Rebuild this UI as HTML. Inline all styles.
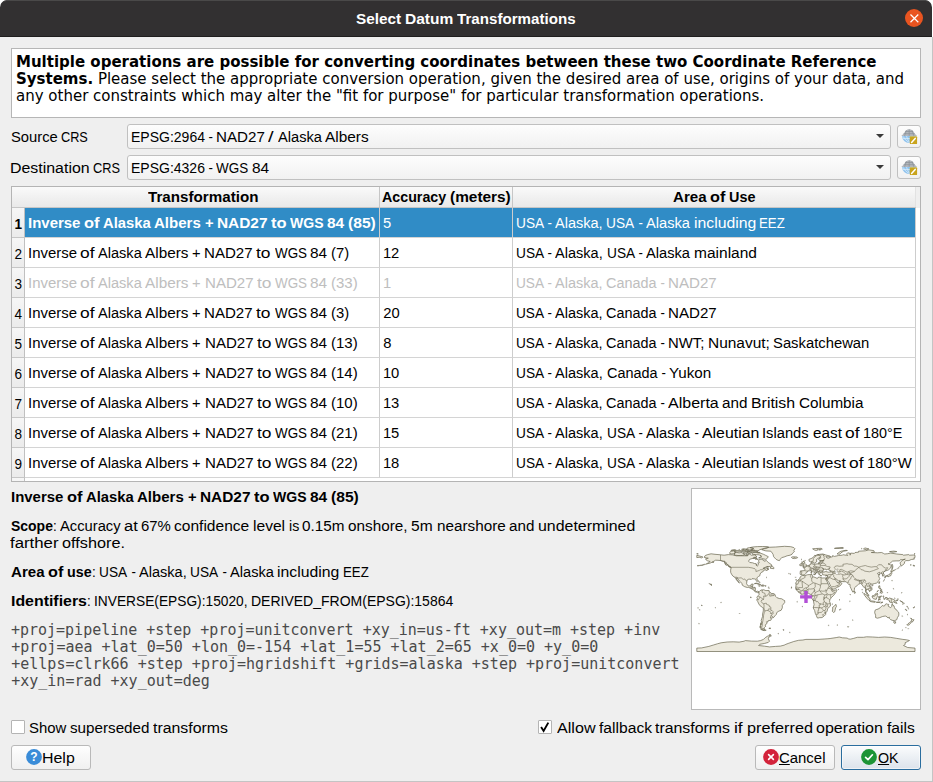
<!DOCTYPE html>
<html lang="en">
<head>
<meta charset="utf-8">
<title>Select Datum Transformations</title>
<style>
*{box-sizing:border-box;margin:0;padding:0}
html,body{width:933px;height:782px;overflow:hidden;background:#fff}
body{position:relative;font-family:"Liberation Sans",sans-serif;font-size:14.75px;color:#000}
#win{position:absolute;left:0;top:0;width:932px;height:782px;background:#efefef;border-radius:7px 7px 0 0;overflow:hidden}
#edgeR{position:absolute;left:932px;top:37px;width:1px;height:745px;background:#c4c4c4}
#edgeB{position:absolute;left:0;top:781px;width:933px;height:1px;background:#c4c4c4}
#titlebar{position:absolute;left:0;top:0;width:932px;height:37px;background:#323031;border-bottom:1px solid #1f1e1e;border-radius:7px 7px 0 0;box-shadow:inset 0 1px 0 #4a4949}
#close{position:absolute;left:904.6px;top:8.7px;width:18.8px;height:18.8px;border-radius:50%;background:#e95420}
.x{position:absolute;white-space:pre;line-height:20px;height:20px;transform-origin:0 0}
.s{display:inline-block;white-space:pre;transform-origin:0 0}
.bd{font-weight:bold}
.ti{font-size:15px;color:#fff}
.mono{font-family:"DejaVu Sans Mono","Liberation Mono",monospace;font-size:15px;color:#4a4a4a}
.w{color:#fff}.g{color:#bebebe}
#intro{position:absolute;left:11px;top:48px;width:910px;height:70px;background:#fff;border:1px solid #b6b6b6;font-family:"DejaVu Sans","Liberation Sans",sans-serif;font-size:15px;line-height:17px;padding:5px 0 0 4px;white-space:pre}
.combo{position:absolute;left:127px;width:764px;height:25px;border:1px solid #c0c0c0;border-radius:3px;background:linear-gradient(#fdfdfd,#f1f1f1)}
.combo i{position:absolute;left:747.5px;top:9.3px;width:0;height:0;border-left:4px solid transparent;border-right:4px solid transparent;border-top:4.8px solid #3a3a3a}
.ibtn{position:absolute;left:897px;width:24px;height:23px;border:1px solid #c0c0c0;border-radius:3px;background:linear-gradient(#fdfdfd,#f1f1f1)}
#table{position:absolute;left:11px;top:186px;width:910px;height:296px;border:1px solid #b4b4b4;background:#fff;overflow:hidden}
.hdr{position:absolute;left:0;top:0;width:904px;height:21px;background:linear-gradient(#fafafa,#f1f1f1 50%,#e9e9e9);border-bottom:1px solid #c6c6c6}
.hfill{position:absolute;left:904px;top:0;width:4px;height:21px;background:#efefef}
.hdr i{position:absolute;top:0;width:1px;height:20px;background:#c6c6c6}
.row{position:absolute;left:0;width:904px;height:30px}
.row .rh{position:absolute;left:0;top:0;width:13px;height:30px;border-right:1px solid #c0c0c0;border-bottom:1px solid #c6c6c6;background:linear-gradient(#f6f6f6,#ebebeb)}
.row .c{position:absolute;top:0;height:30px;border-right:1px solid #cdcdcd;border-bottom:1px solid #d4d4d4}
.c1{left:13px;width:355px}.c2{left:368px;width:133px}.c3{left:501px;width:403px}
.row.sel .c{background:#308cc6}
#map{position:absolute;left:691px;top:488px;width:230px;height:222px;background:#fff;border:1px solid #b9b9b9}
.cb{position:absolute;width:14px;height:14px;background:#fff;border:1px solid #b4b4b4;border-radius:1px}
.cb svg{position:absolute;left:0;top:0}
.btn{position:absolute;top:745px;width:80px;height:25px;border:1px solid #b9b9b9;border-radius:3px;background:linear-gradient(#fefefe,#f0f0f0)}
.btn.ok{border:1px solid #2a6d9e;background:linear-gradient(#fbfcfd,#dce3eb);box-shadow:inset 0 0 0 1px rgba(255,255,255,.55)}
.ic{position:absolute;top:749px;width:16px;height:16px}
</style>
</head>
<body>
<div id="win">
<div id="titlebar"></div>
<div class="x bd ti" id="title" style="top:9px;left:356.28px"><span class="s" style="width:48.79px;transform:scaleX(1.0217)">Select </span><span class="s" style="width:51.95px;transform:scaleX(1.0347)">Datum </span><span class="s" style="width:118.59px;transform:scaleX(1.0089)">Transformations</span></div>
<div id="close"><svg style="position:absolute;left:0;top:0" width="18.8" height="18.8" viewBox="0 0 18.8 18.8"><path d="M5.5 5.5 L13.3 13.3 M13.3 5.5 L5.5 13.3" stroke="#fff" stroke-width="1.2" fill="none"/></svg></div>
<div id="intro"><b>Multiple operations are possible for converting coordinates between these two Coordinate Reference
Systems.</b> Please select the appropriate conversion operation, given the desired area of use, origins of your data, and
any other constraints which may alter the "fit for purpose" for particular transformation operations.</div>
<div class="x" id="lsrc" style="top:127px;left:10.58px"><span class="s" style="width:50.32px;transform:scaleX(1.0020)">Source </span><span class="s" style="width:26.87px;transform:scaleX(0.8623)">CRS</span></div>
<div class="x" id="ldst" style="top:158px;left:10.35px"><span class="s" style="width:83.15px;transform:scaleX(1.0793)">Destination </span><span class="s" style="width:26.97px;transform:scaleX(0.8656)">CRS</span></div>
<div class="combo" style="top:124px"><i></i></div>
<div class="combo" style="top:155px"><i></i></div>
<div class="x" id="csrc" style="top:127px;left:130.76px"><span class="s" style="width:77.49px;transform:scaleX(0.9500)">EPSG:2964 </span><span class="s" style="width:7.93px;text-indent:0.7px;transform:scaleX(0.8982)">- </span><span class="s" style="width:52.31px;transform:scaleX(1.0263)">NAD27 </span><span class="s" style="width:9.12px;transform:scaleX(1.3641)">/ </span><span class="s" style="width:47.45px;transform:scaleX(0.9929)">Alaska </span><span class="s" style="width:43.70px;transform:scaleX(1.0447)">Albers</span></div>
<div class="x" id="cdst" style="top:158px;left:130.77px"><span class="s" style="width:77.39px;transform:scaleX(0.9488)">EPSG:4326 </span><span class="s" style="width:7.92px;text-indent:0.7px;transform:scaleX(0.8971)">- </span><span class="s" style="width:35.66px;transform:scaleX(0.9125)">WGS </span><span class="s" style="width:17.21px;transform:scaleX(1.0480)">84</span></div>
<div class="ibtn" style="top:125px"><svg style="position:absolute;left:-1px;top:-1px" width="24" height="23" viewBox="0 0 24 23"><path d="M4.2 10.9 Q5.2 9.9 6.6 8.7 Q8.3 5.6 10.4 4.6 Q12.2 4 14 4.6 Q16.1 5.6 17.8 8.7 Q19.2 9.9 20.2 10.9 Z" fill="#b3b7bc"/><path d="M6.6 8.7 H17.8 M8.2 6.5 H16.2 M12.2 4.3 V10.8 M9.4 5.2 L7.6 10.8 M15 5.2 L16.8 10.8" stroke="#8b9096" stroke-width="0.7" fill="none"/><path d="M5.1 10.9 A7.1 7.1 0 0 0 19.3 10.9 Z" fill="#8fc3ee"/><path d="M6.2 11.5 Q8 15 11.5 17.2 M9.5 11.2 Q10.5 14.5 12.5 17.5 M5.8 13.6 H13" stroke="#d3e9fa" stroke-width="0.9" fill="none"/><rect x="12.8" y="11.6" width="7.3" height="7.5" rx="0.9" fill="#c9a41c"/><path d="M12.8 12.5 Q12.8 11.6 13.7 11.6 H19.2 Q20.1 11.6 20.1 12.5" fill="none" stroke="#dcc050" stroke-width="0.6"/><path d="M14.6 17.4 L18.2 13.4" stroke="#fff" stroke-width="1.5" stroke-linecap="round"/></svg>
</div>
<div class="ibtn" style="top:156px"><svg style="position:absolute;left:-1px;top:-1px" width="24" height="23" viewBox="0 0 24 23"><path d="M4.2 10.9 Q5.2 9.9 6.6 8.7 Q8.3 5.6 10.4 4.6 Q12.2 4 14 4.6 Q16.1 5.6 17.8 8.7 Q19.2 9.9 20.2 10.9 Z" fill="#b3b7bc"/><path d="M6.6 8.7 H17.8 M8.2 6.5 H16.2 M12.2 4.3 V10.8 M9.4 5.2 L7.6 10.8 M15 5.2 L16.8 10.8" stroke="#8b9096" stroke-width="0.7" fill="none"/><path d="M5.1 10.9 A7.1 7.1 0 0 0 19.3 10.9 Z" fill="#8fc3ee"/><path d="M6.2 11.5 Q8 15 11.5 17.2 M9.5 11.2 Q10.5 14.5 12.5 17.5 M5.8 13.6 H13" stroke="#d3e9fa" stroke-width="0.9" fill="none"/><rect x="12.8" y="11.6" width="7.3" height="7.5" rx="0.9" fill="#c9a41c"/><path d="M12.8 12.5 Q12.8 11.6 13.7 11.6 H19.2 Q20.1 11.6 20.1 12.5" fill="none" stroke="#dcc050" stroke-width="0.6"/><path d="M14.6 17.4 L18.2 13.4" stroke="#fff" stroke-width="1.5" stroke-linecap="round"/></svg>
</div>
<div id="table">
<div class="hdr"><i style="left:367px"></i><i style="left:500px"></i><i style="left:903px;background:#e2e2e2"></i></div><div class="hfill"></div>
<div class="row sel" style="top:21px"><div class="rh"></div><div class="c c1"></div><div class="c c2"></div><div class="c c3"></div></div>
<div class="row" style="top:51px"><div class="rh"></div><div class="c c1"></div><div class="c c2"></div><div class="c c3"></div></div>
<div class="row" style="top:81px"><div class="rh"></div><div class="c c1"></div><div class="c c2"></div><div class="c c3"></div></div>
<div class="row" style="top:111px"><div class="rh"></div><div class="c c1"></div><div class="c c2"></div><div class="c c3"></div></div>
<div class="row" style="top:141px"><div class="rh"></div><div class="c c1"></div><div class="c c2"></div><div class="c c3"></div></div>
<div class="row" style="top:171px"><div class="rh"></div><div class="c c1"></div><div class="c c2"></div><div class="c c3"></div></div>
<div class="row" style="top:201px"><div class="rh"></div><div class="c c1"></div><div class="c c2"></div><div class="c c3"></div></div>
<div class="row" style="top:231px"><div class="rh"></div><div class="c c1"></div><div class="c c2"></div><div class="c c3"></div></div>
<div class="row" style="top:261px"><div class="rh"></div><div class="c c1"></div><div class="c c2"></div><div class="c c3"></div></div>
<div class="row" style="top:291px"><div class="rh"></div></div>
</div>
<div class="x bd" id="h1" style="top:187px;left:147.72px"><span class="s" style="width:110.45px;transform:scaleX(1.0286)">Transformation</span></div>
<div class="x bd" id="h2" style="top:187px;left:382.15px"><span class="s" style="width:67.82px;transform:scaleX(0.9668)">Accuracy </span><span class="s" style="width:60.75px;transform:scaleX(1.0437)">(meters)</span></div>
<div class="x bd" id="h3" style="top:187px;left:673.35px"><span class="s" style="width:37.15px;transform:scaleX(1.0236)">Area </span><span class="s" style="width:18.89px;transform:scaleX(1.0994)">of </span><span class="s" style="width:26.40px;transform:scaleX(0.9751)">Use</span></div>
<div class="x bd" id="rh0" style="top:214px;left:11.6px;width:13.6px;text-align:center;transform:scaleX(0.92);">1</div>
<div class="x bd w" id="r0a" style="top:213px;left:27.67px"><span class="s" style="width:56.07px;transform:scaleX(1.0152)">Inverse </span><span class="s" style="width:19.13px;transform:scaleX(1.1133)">of </span><span class="s" style="width:51.45px;transform:scaleX(1.0052)">Alaska </span><span class="s" style="width:50.45px;transform:scaleX(1.0196)">Albers </span><span class="s" style="width:12.25px;transform:scaleX(1.0001)">+ </span><span class="s" style="width:54.14px;transform:scaleX(1.0439)">NAD27 </span><span class="s" style="width:19.18px;transform:scaleX(1.1168)">to </span><span class="s" style="width:37.16px;transform:scaleX(0.9517)">WGS </span><span class="s" style="width:20.88px;transform:scaleX(1.0505)">84 </span><span class="s" style="width:27.82px;transform:scaleX(1.0604)">(85)</span></div>
<div class="x w" id="r0b" style="top:213px;left:382.90px;">5</div>
<div class="x w" id="r0c" style="top:213px;left:515.61px"><span class="s" style="width:31.81px;transform:scaleX(0.9278)">USA </span><span class="s" style="width:7.91px;text-indent:0.7px;transform:scaleX(0.9004)">- </span><span class="s" style="width:51.18px;transform:scaleX(0.9853)">Alaska, </span><span class="s" style="width:31.83px;transform:scaleX(0.9278)">USA </span><span class="s" style="width:7.91px;text-indent:0.7px;transform:scaleX(0.8943)">- </span><span class="s" style="width:47.43px;transform:scaleX(0.9921)">Alaska </span><span class="s" style="width:65.80px;transform:scaleX(1.0700)">including </span><span class="s" style="width:25.78px;transform:scaleX(0.8981)">EEZ</span></div>
<div class="x" id="rh1" style="top:244px;left:11.6px;width:13.6px;text-align:center;transform:scaleX(0.92);">2</div>
<div class="x" id="r1a" style="top:243px;left:27.56px"><span class="s" style="width:52.50px;transform:scaleX(1.0133)">Inverse </span><span class="s" style="width:18.16px;transform:scaleX(1.1800)">of </span><span class="s" style="width:47.23px;transform:scaleX(0.9880)">Alaska </span><span class="s" style="width:46.95px;transform:scaleX(1.0395)">Albers </span><span class="s" style="width:12.07px;transform:scaleX(0.9940)">+ </span><span class="s" style="width:52.05px;transform:scaleX(1.0213)">NAD27 </span><span class="s" style="width:18.32px;transform:scaleX(1.1800)">to </span><span class="s" style="width:35.53px;transform:scaleX(0.9091)">WGS </span><span class="s" style="width:20.63px;transform:scaleX(1.0441)">84 </span><span class="s" style="width:18.14px;transform:scaleX(1.0053)">(7)</span></div>
<div class="x" id="r1b" style="top:243px;left:382.89px;">12</div>
<div class="x" id="r1c" style="top:243px;left:515.60px"><span class="s" style="width:31.84px;transform:scaleX(0.9286)">USA </span><span class="s" style="width:7.92px;text-indent:0.7px;transform:scaleX(0.9011)">- </span><span class="s" style="width:51.22px;transform:scaleX(0.9862)">Alaska, </span><span class="s" style="width:31.86px;transform:scaleX(0.9287)">USA </span><span class="s" style="width:7.92px;text-indent:0.7px;transform:scaleX(0.8951)">- </span><span class="s" style="width:47.47px;transform:scaleX(0.9930)">Alaska </span><span class="s" style="width:62.97px;transform:scaleX(1.0519)">mainland</span></div>
<div class="x" id="rh2" style="top:274px;left:11.6px;width:13.6px;text-align:center;transform:scaleX(0.92);">3</div>
<div class="x g" id="r2a" style="top:273px;left:27.56px"><span class="s" style="width:52.53px;transform:scaleX(1.0138)">Inverse </span><span class="s" style="width:18.17px;transform:scaleX(1.1800)">of </span><span class="s" style="width:47.26px;transform:scaleX(0.9886)">Alaska </span><span class="s" style="width:46.97px;transform:scaleX(1.0401)">Albers </span><span class="s" style="width:12.08px;transform:scaleX(0.9945)">+ </span><span class="s" style="width:52.08px;transform:scaleX(1.0218)">NAD27 </span><span class="s" style="width:18.33px;transform:scaleX(1.1800)">to </span><span class="s" style="width:35.55px;transform:scaleX(0.9096)">WGS </span><span class="s" style="width:20.64px;transform:scaleX(1.0447)">84 </span><span class="s" style="width:26.71px;transform:scaleX(1.0177)">(33)</span></div>
<div class="x g" id="r2b" style="top:273px;left:382.89px;">1</div>
<div class="x g" id="r2c" style="top:273px;left:515.61px"><span class="s" style="width:31.76px;transform:scaleX(0.9263)">USA </span><span class="s" style="width:7.90px;text-indent:0.7px;transform:scaleX(0.8988)">- </span><span class="s" style="width:51.09px;transform:scaleX(0.9837)">Alaska, </span><span class="s" style="width:53.93px;transform:scaleX(0.9758)">Canada </span><span class="s" style="width:7.90px;text-indent:0.7px;transform:scaleX(0.8928)">- </span><span class="s" style="width:48.69px;transform:scaleX(1.0238)">NAD27</span></div>
<div class="x" id="rh3" style="top:304px;left:11.6px;width:13.6px;text-align:center;transform:scaleX(0.92);">4</div>
<div class="x" id="r3a" style="top:303px;left:27.56px"><span class="s" style="width:52.50px;transform:scaleX(1.0133)">Inverse </span><span class="s" style="width:18.16px;transform:scaleX(1.1800)">of </span><span class="s" style="width:47.23px;transform:scaleX(0.9880)">Alaska </span><span class="s" style="width:46.95px;transform:scaleX(1.0395)">Albers </span><span class="s" style="width:12.07px;transform:scaleX(0.9940)">+ </span><span class="s" style="width:52.05px;transform:scaleX(1.0213)">NAD27 </span><span class="s" style="width:18.32px;transform:scaleX(1.1800)">to </span><span class="s" style="width:35.53px;transform:scaleX(0.9091)">WGS </span><span class="s" style="width:20.63px;transform:scaleX(1.0441)">84 </span><span class="s" style="width:18.14px;transform:scaleX(1.0053)">(3)</span></div>
<div class="x" id="r3b" style="top:303px;left:383.24px;">20</div>
<div class="x" id="r3c" style="top:303px;left:515.61px"><span class="s" style="width:31.76px;transform:scaleX(0.9263)">USA </span><span class="s" style="width:7.90px;text-indent:0.7px;transform:scaleX(0.8988)">- </span><span class="s" style="width:51.09px;transform:scaleX(0.9837)">Alaska, </span><span class="s" style="width:53.93px;transform:scaleX(0.9758)">Canada </span><span class="s" style="width:7.90px;text-indent:0.7px;transform:scaleX(0.8928)">- </span><span class="s" style="width:48.69px;transform:scaleX(1.0238)">NAD27</span></div>
<div class="x" id="rh4" style="top:334px;left:11.6px;width:13.6px;text-align:center;transform:scaleX(0.92);">5</div>
<div class="x" id="r4a" style="top:333px;left:27.56px"><span class="s" style="width:52.53px;transform:scaleX(1.0138)">Inverse </span><span class="s" style="width:18.17px;transform:scaleX(1.1800)">of </span><span class="s" style="width:47.26px;transform:scaleX(0.9886)">Alaska </span><span class="s" style="width:46.97px;transform:scaleX(1.0401)">Albers </span><span class="s" style="width:12.08px;transform:scaleX(0.9945)">+ </span><span class="s" style="width:52.08px;transform:scaleX(1.0218)">NAD27 </span><span class="s" style="width:18.33px;transform:scaleX(1.1800)">to </span><span class="s" style="width:35.55px;transform:scaleX(0.9096)">WGS </span><span class="s" style="width:20.64px;transform:scaleX(1.0447)">84 </span><span class="s" style="width:26.71px;transform:scaleX(1.0177)">(13)</span></div>
<div class="x" id="r4b" style="top:333px;left:383.29px;">8</div>
<div class="x" id="r4c" style="top:333px;left:515.61px"><span class="s" style="width:31.75px;transform:scaleX(0.9258)">USA </span><span class="s" style="width:7.89px;text-indent:0.7px;transform:scaleX(0.8984)">- </span><span class="s" style="width:51.07px;transform:scaleX(0.9832)">Alaska, </span><span class="s" style="width:53.90px;transform:scaleX(0.9754)">Canada </span><span class="s" style="width:7.89px;text-indent:0.7px;transform:scaleX(0.8924)">- </span><span class="s" style="width:39.84px;transform:scaleX(1.0082)">NWT; </span><span class="s" style="width:65.39px;transform:scaleX(1.0484)">Nunavut; </span><span class="s" style="width:96.33px;transform:scaleX(1.0041)">Saskatchewan</span></div>
<div class="x" id="rh5" style="top:364px;left:11.6px;width:13.6px;text-align:center;transform:scaleX(0.92);">6</div>
<div class="x" id="r5a" style="top:363px;left:27.56px"><span class="s" style="width:52.53px;transform:scaleX(1.0138)">Inverse </span><span class="s" style="width:18.17px;transform:scaleX(1.1800)">of </span><span class="s" style="width:47.26px;transform:scaleX(0.9886)">Alaska </span><span class="s" style="width:46.97px;transform:scaleX(1.0401)">Albers </span><span class="s" style="width:12.08px;transform:scaleX(0.9945)">+ </span><span class="s" style="width:52.08px;transform:scaleX(1.0218)">NAD27 </span><span class="s" style="width:18.33px;transform:scaleX(1.1800)">to </span><span class="s" style="width:35.55px;transform:scaleX(0.9096)">WGS </span><span class="s" style="width:20.64px;transform:scaleX(1.0447)">84 </span><span class="s" style="width:26.71px;transform:scaleX(1.0177)">(14)</span></div>
<div class="x" id="r5b" style="top:363px;left:382.89px;">10</div>
<div class="x" id="r5c" style="top:363px;left:515.60px"><span class="s" style="width:31.86px;transform:scaleX(0.9292)">USA </span><span class="s" style="width:7.92px;text-indent:0.7px;transform:scaleX(0.9016)">- </span><span class="s" style="width:51.25px;transform:scaleX(0.9868)">Alaska, </span><span class="s" style="width:54.10px;transform:scaleX(0.9789)">Canada </span><span class="s" style="width:7.92px;text-indent:0.7px;transform:scaleX(0.8956)">- </span><span class="s" style="width:42.26px;transform:scaleX(1.0304)">Yukon</span></div>
<div class="x" id="rh6" style="top:394px;left:11.6px;width:13.6px;text-align:center;transform:scaleX(0.92);">7</div>
<div class="x" id="r6a" style="top:393px;left:27.56px"><span class="s" style="width:52.53px;transform:scaleX(1.0138)">Inverse </span><span class="s" style="width:18.17px;transform:scaleX(1.1800)">of </span><span class="s" style="width:47.26px;transform:scaleX(0.9886)">Alaska </span><span class="s" style="width:46.97px;transform:scaleX(1.0401)">Albers </span><span class="s" style="width:12.08px;transform:scaleX(0.9945)">+ </span><span class="s" style="width:52.08px;transform:scaleX(1.0218)">NAD27 </span><span class="s" style="width:18.33px;transform:scaleX(1.1800)">to </span><span class="s" style="width:35.55px;transform:scaleX(0.9096)">WGS </span><span class="s" style="width:20.64px;transform:scaleX(1.0447)">84 </span><span class="s" style="width:26.71px;transform:scaleX(1.0177)">(10)</span></div>
<div class="x" id="r6b" style="top:393px;left:382.89px;">13</div>
<div class="x" id="r6c" style="top:393px;left:515.61px"><span class="s" style="width:31.77px;transform:scaleX(0.9267)">USA </span><span class="s" style="width:7.90px;text-indent:0.7px;transform:scaleX(0.8992)">- </span><span class="s" style="width:51.11px;transform:scaleX(0.9841)">Alaska, </span><span class="s" style="width:53.95px;transform:scaleX(0.9763)">Canada </span><span class="s" style="width:7.90px;text-indent:0.7px;transform:scaleX(0.8932)">- </span><span class="s" style="width:54.25px;transform:scaleX(1.0862)">Alberta </span><span class="s" style="width:28.93px;transform:scaleX(1.0339)">and </span><span class="s" style="width:47.64px;transform:scaleX(1.0772)">British </span><span class="s" style="width:64.52px;transform:scaleX(1.0351)">Columbia</span></div>
<div class="x" id="rh7" style="top:424px;left:11.6px;width:13.6px;text-align:center;transform:scaleX(0.92);">8</div>
<div class="x" id="r7a" style="top:423px;left:27.56px"><span class="s" style="width:52.53px;transform:scaleX(1.0138)">Inverse </span><span class="s" style="width:18.17px;transform:scaleX(1.1800)">of </span><span class="s" style="width:47.26px;transform:scaleX(0.9886)">Alaska </span><span class="s" style="width:46.97px;transform:scaleX(1.0401)">Albers </span><span class="s" style="width:12.08px;transform:scaleX(0.9945)">+ </span><span class="s" style="width:52.08px;transform:scaleX(1.0218)">NAD27 </span><span class="s" style="width:18.33px;transform:scaleX(1.1800)">to </span><span class="s" style="width:35.55px;transform:scaleX(0.9096)">WGS </span><span class="s" style="width:20.64px;transform:scaleX(1.0447)">84 </span><span class="s" style="width:26.71px;transform:scaleX(1.0177)">(21)</span></div>
<div class="x" id="r7b" style="top:423px;left:382.89px;">15</div>
<div class="x" id="r7c" style="top:423px;left:515.61px"><span class="s" style="width:31.82px;transform:scaleX(0.9281)">USA </span><span class="s" style="width:7.91px;text-indent:0.7px;transform:scaleX(0.9006)">- </span><span class="s" style="width:51.19px;transform:scaleX(0.9856)">Alaska, </span><span class="s" style="width:31.84px;transform:scaleX(0.9281)">USA </span><span class="s" style="width:7.91px;text-indent:0.7px;transform:scaleX(0.8946)">- </span><span class="s" style="width:47.44px;transform:scaleX(0.9924)">Alaska </span><span class="s" style="width:7.91px;text-indent:0.7px;transform:scaleX(0.8974)">- </span><span class="s" style="width:60.80px;transform:scaleX(1.0746)">Aleutian </span><span class="s" style="width:50.14px;transform:scaleX(0.9978)">Islands </span><span class="s" style="width:32.38px;transform:scaleX(1.0356)">east </span><span class="s" style="width:18.24px;transform:scaleX(1.1800)">of </span><span class="s" style="width:39.31px;transform:scaleX(0.9739)">180°E</span></div>
<div class="x" id="rh8" style="top:454px;left:11.6px;width:13.6px;text-align:center;transform:scaleX(0.92);">9</div>
<div class="x" id="r8a" style="top:453px;left:27.56px"><span class="s" style="width:52.53px;transform:scaleX(1.0138)">Inverse </span><span class="s" style="width:18.17px;transform:scaleX(1.1800)">of </span><span class="s" style="width:47.26px;transform:scaleX(0.9886)">Alaska </span><span class="s" style="width:46.97px;transform:scaleX(1.0401)">Albers </span><span class="s" style="width:12.08px;transform:scaleX(0.9945)">+ </span><span class="s" style="width:52.08px;transform:scaleX(1.0218)">NAD27 </span><span class="s" style="width:18.33px;transform:scaleX(1.1800)">to </span><span class="s" style="width:35.55px;transform:scaleX(0.9096)">WGS </span><span class="s" style="width:20.64px;transform:scaleX(1.0447)">84 </span><span class="s" style="width:26.71px;transform:scaleX(1.0177)">(22)</span></div>
<div class="x" id="r8b" style="top:453px;left:382.89px;">18</div>
<div class="x" id="r8c" style="top:453px;left:515.61px"><span class="s" style="width:31.83px;transform:scaleX(0.9282)">USA </span><span class="s" style="width:7.91px;text-indent:0.7px;transform:scaleX(0.9007)">- </span><span class="s" style="width:51.20px;transform:scaleX(0.9858)">Alaska, </span><span class="s" style="width:31.84px;transform:scaleX(0.9282)">USA </span><span class="s" style="width:7.91px;text-indent:0.7px;transform:scaleX(0.8947)">- </span><span class="s" style="width:47.45px;transform:scaleX(0.9926)">Alaska </span><span class="s" style="width:7.91px;text-indent:0.7px;transform:scaleX(0.8975)">- </span><span class="s" style="width:60.81px;transform:scaleX(1.0748)">Aleutian </span><span class="s" style="width:50.15px;transform:scaleX(0.9979)">Islands </span><span class="s" style="width:36.37px;transform:scaleX(1.0835)">west </span><span class="s" style="width:18.24px;transform:scaleX(1.1800)">of </span><span class="s" style="width:44.86px;transform:scaleX(1.0094)">180°W</span></div>
<div class="x bd" id="d1" style="top:487px;left:10.68px"><span class="s" style="width:56.02px;transform:scaleX(1.0143)">Inverse </span><span class="s" style="width:19.11px;transform:scaleX(1.1124)">of </span><span class="s" style="width:51.41px;transform:scaleX(1.0043)">Alaska </span><span class="s" style="width:50.41px;transform:scaleX(1.0187)">Albers </span><span class="s" style="width:12.24px;transform:scaleX(0.9992)">+ </span><span class="s" style="width:54.10px;transform:scaleX(1.0430)">NAD27 </span><span class="s" style="width:19.16px;transform:scaleX(1.1158)">to </span><span class="s" style="width:37.13px;transform:scaleX(0.9509)">WGS </span><span class="s" style="width:20.86px;transform:scaleX(1.0496)">84 </span><span class="s" style="width:27.80px;transform:scaleX(1.0595)">(85)</span></div>
<div class="x bd" id="d2a" style="top:516px;left:10.81px"><span class="s" style="width:41.92px;transform:scaleX(0.9471)">Scope</span></div>
<div class="x" id="d2b" style="top:516px;left:52.55px"><span class="s" style="width:7.22px;transform:scaleX(0.9110)">: </span><span class="s" style="width:64.09px;transform:scaleX(0.9993)">Accuracy </span><span class="s" style="width:17.25px;transform:scaleX(1.1173)">at </span><span class="s" style="width:33.35px;transform:scaleX(1.0115)">67% </span><span class="s" style="width:78.76px;transform:scaleX(1.0550)">confidence </span><span class="s" style="width:35.56px;transform:scaleX(1.0573)">level </span><span class="s" style="width:13.76px;transform:scaleX(0.9650)">is </span><span class="s" style="width:45.95px;transform:scaleX(1.0364)">0.15m </span><span class="s" style="width:62.96px;transform:scaleX(1.0360)">onshore, </span><span class="s" style="width:25.13px;transform:scaleX(1.0556)">5m </span><span class="s" style="width:72.28px;transform:scaleX(1.0357)">nearshore </span><span class="s" style="width:28.81px;transform:scaleX(1.0289)">and </span><span class="s" style="width:97.29px;transform:scaleX(1.0784)">undetermined</span></div>
<div class="x" id="d3" style="top:533px;left:10.24px"><span class="s" style="width:52.01px;transform:scaleX(1.1375)">farther </span><span class="s" style="width:62.96px;transform:scaleX(1.1019)">offshore.</span></div>
<div class="x bd" id="d4a" style="top:562px;left:11.35px"><span class="s" style="width:37.09px;transform:scaleX(1.0219)">Area </span><span class="s" style="width:18.86px;transform:scaleX(1.0976)">of </span><span class="s" style="width:24.62px;transform:scaleX(0.9678)">use</span></div>
<div class="x" id="d4b" style="top:562px;left:91.75px"><span class="s" style="width:7.26px;transform:scaleX(0.9158)">: </span><span class="s" style="width:31.81px;transform:scaleX(0.9272)">USA </span><span class="s" style="width:7.91px;text-indent:0.7px;transform:scaleX(0.8973)">- </span><span class="s" style="width:51.17px;transform:scaleX(0.9855)">Alaska, </span><span class="s" style="width:31.82px;transform:scaleX(0.9276)">USA </span><span class="s" style="width:7.91px;text-indent:0.7px;transform:scaleX(0.8969)">- </span><span class="s" style="width:47.42px;transform:scaleX(0.9916)">Alaska </span><span class="s" style="width:65.79px;transform:scaleX(1.0698)">including </span><span class="s" style="width:25.77px;transform:scaleX(0.8979)">EEZ</span></div>
<div class="x bd" id="d5a" style="top:591px;left:10.66px"><span class="s" style="width:75.91px;transform:scaleX(1.0767)">Identifiers</span></div>
<div class="x" id="d5b" style="top:591px;left:86.66px"><span class="s" style="width:7.20px;transform:scaleX(0.9084)">: </span><span class="s" style="width:157.01px;transform:scaleX(0.9317)">INVERSE(EPSG):15020, </span><span class="s" style="width:202.27px;transform:scaleX(0.9490)">DERIVED_FROM(EPSG):15864</span></div>
<div class="x mono" id="m1" style="top:620px;left:11.24px;transform:scaleX(0.9984);">+proj=pipeline +step +proj=unitconvert +xy_in=us-ft +xy_out=m +step +inv</div>
<div class="x mono" id="m2" style="top:637px;left:11.24px;">+proj=aea +lat_0=50 +lon_0=-154 +lat_1=55 +lat_2=65 +x_0=0 +y_0=0</div>
<div class="x mono" id="m3" style="top:654px;left:11.24px;">+ellps=clrk66 +step +proj=hgridshift +grids=alaska +step +proj=unitconvert</div>
<div class="x mono" id="m4" style="top:671px;left:11.23px;">+xy_in=rad +xy_out=deg</div>
<div id="map"><svg width="228" height="220" viewBox="0 0 228 220">
<path d="M12.1 68.3 L13.3 66.5 L15.7 65.6 L19.1 64.8 L23.0 65.3 L28.5 65.8 L32.1 66.2 L36.3 65.6 L41.2 65.9 L44.2 66.8 L48.5 66.8 L52.1 66.8 L55.7 66.8 L56.9 64.7 L59.4 66.2 L62.4 65.9 L64.2 66.8 L64.8 68.0 L61.2 69.2 L57.5 70.4 L56.6 72.2 L57.8 73.5 L60.6 73.8 L62.4 74.5 L64.2 74.7 L64.2 76.2 L65.4 77.0 L66.0 76.5 L66.3 74.7 L67.2 73.5 L66.6 72.2 L66.9 70.2 L69.7 70.4 L71.5 71.0 L72.1 72.2 L74.5 71.6 L75.1 72.2 L76.6 73.8 L78.8 75.0 L80.0 76.5 L78.1 77.4 L74.5 77.7 L73.3 78.3 L70.9 79.5 L74.5 78.6 L74.8 79.5 L76.9 80.1 L75.7 81.0 L73.9 81.6 L73.3 80.7 L71.5 81.6 L71.2 82.5 L69.1 83.5 L68.1 85.0 L67.8 86.8 L66.6 87.4 L64.8 88.9 L65.4 91.6 L65.1 92.7 L64.2 91.6 L63.6 90.1 L62.4 89.9 L60.0 89.7 L59.4 90.4 L56.9 90.1 L55.1 91.0 L54.8 92.8 L54.6 94.7 L55.7 96.5 L56.9 97.0 L58.8 96.6 L59.1 95.3 L61.2 95.0 L60.6 97.1 L60.3 98.3 L63.0 98.4 L63.5 99.5 L63.2 101.3 L64.2 102.5 L65.7 102.2 L66.9 102.8 L66.6 103.8 L65.4 103.6 L64.5 103.2 L63.6 103.0 L62.1 101.9 L60.9 100.1 L58.8 99.5 L56.9 98.3 L55.4 98.5 L52.7 97.7 L50.3 96.2 L50.0 94.7 L48.5 92.8 L46.0 90.4 L45.4 89.0 L44.4 88.9 L44.8 90.4 L46.6 92.8 L47.5 94.1 L46.0 92.8 L44.8 91.3 L43.6 89.5 L42.9 88.3 L40.9 87.1 L40.0 85.9 L38.8 83.8 L38.6 81.9 L38.8 79.8 L39.4 78.7 L38.2 77.7 L36.3 76.5 L34.8 75.0 L33.3 73.5 L31.5 72.5 L29.1 71.6 L26.0 71.3 L23.6 71.2 L22.1 72.1 L20.6 72.9 L18.2 74.1 L15.7 74.7 L14.2 75.0 L16.3 73.8 L18.2 72.5 L15.7 71.9 L13.9 70.7 L13.6 69.8 L16.3 69.2 L14.5 68.9ZM66.9 102.8 L68.1 101.6 L70.3 100.7 L70.6 101.3 L71.5 100.7 L73.9 101.6 L76.3 101.5 L77.5 102.8 L79.4 104.4 L81.8 104.7 L83.0 105.5 L83.6 107.4 L84.8 108.6 L87.2 109.5 L89.7 109.8 L91.5 111.0 L92.7 111.6 L92.7 113.5 L91.5 115.0 L90.3 116.5 L90.3 118.9 L89.1 121.3 L86.9 122.1 L84.8 123.5 L84.4 125.3 L83.0 126.8 L81.5 128.6 L79.4 129.0 L78.5 128.6 L79.4 130.1 L78.8 131.3 L76.3 131.6 L76.0 132.8 L74.5 132.8 L75.1 133.9 L74.3 135.3 L73.0 136.2 L73.9 137.1 L72.4 138.6 L72.1 139.7 L72.5 140.7 L74.2 141.2 L72.7 141.6 L70.9 141.0 L69.1 139.8 L68.1 138.3 L68.5 136.2 L69.7 133.5 L69.2 131.6 L69.7 129.8 L70.6 127.4 L70.6 125.0 L71.3 121.9 L71.3 119.2 L70.3 118.3 L67.8 116.5 L66.9 115.0 L65.7 112.5 L64.7 111.0 L65.4 109.5 L64.9 108.6 L65.4 107.4 L66.3 106.5 L67.1 105.6 L66.9 103.8ZM69.7 60.6 L72.7 59.2 L76.3 58.3 L83.6 58.0 L92.7 57.3 L98.8 57.7 L101.8 58.6 L103.0 59.8 L101.8 61.3 L102.4 62.6 L100.6 64.1 L100.0 65.3 L98.1 66.2 L95.1 66.8 L92.1 68.0 L89.7 68.6 L88.4 70.1 L87.5 71.6 L86.0 71.3 L84.2 70.4 L82.7 68.9 L81.5 67.4 L81.2 65.6 L80.3 64.1 L78.8 62.2 L73.9 61.9 L71.5 61.3ZM110.3 86.3 L112.7 86.7 L115.7 85.7 L120.0 85.5 L120.6 86.8 L120.3 87.5 L123.0 88.4 L125.4 89.5 L126.0 88.3 L127.8 88.2 L130.3 89.0 L132.7 88.9 L134.6 89.1 L133.6 89.9 L135.1 92.8 L136.3 95.3 L137.2 97.1 L138.7 98.9 L140.1 100.4 L140.1 101.0 L141.8 101.5 L144.8 100.7 L144.8 101.6 L143.6 103.8 L141.8 106.2 L139.4 108.6 L138.1 110.4 L137.5 112.2 L138.4 114.7 L138.4 117.1 L135.7 119.5 L135.1 122.2 L133.8 123.8 L133.6 125.6 L132.1 127.1 L130.0 128.6 L127.2 128.7 L126.0 129.1 L125.0 128.6 L124.5 126.8 L123.3 124.4 L122.7 121.6 L121.2 118.9 L122.1 115.6 L121.4 111.6 L119.7 109.2 L119.7 107.4 L119.8 105.7 L118.1 105.3 L116.3 104.2 L114.5 104.4 L112.1 105.0 L109.4 105.3 L107.5 104.1 L106.0 102.5 L104.8 101.3 L103.6 99.1 L103.9 97.1 L104.2 95.3 L103.6 94.1 L105.1 91.9 L106.0 91.0 L107.8 89.8 L108.1 88.0ZM108.4 85.6 L108.1 84.4 L108.4 81.9 L112.7 81.6 L113.0 80.1 L111.2 78.6 L113.0 78.5 L114.8 77.2 L116.3 76.5 L118.7 75.3 L119.1 73.5 L120.3 73.2 L120.0 74.7 L121.2 75.3 L122.4 75.3 L125.1 74.9 L126.6 74.7 L126.9 73.2 L128.4 73.2 L128.1 72.1 L130.9 71.8 L132.1 71.6 L129.1 71.5 L127.5 71.6 L126.8 71.0 L126.9 69.8 L129.1 68.6 L128.4 68.1 L126.9 68.9 L124.5 70.4 L124.5 71.6 L125.1 71.9 L123.9 73.5 L122.7 74.1 L121.8 74.4 L120.6 72.2 L118.7 72.9 L117.2 72.2 L116.9 70.4 L120.0 69.2 L122.4 67.1 L124.8 65.9 L127.8 65.3 L130.9 65.0 L132.7 65.6 L133.9 66.0 L138.1 67.1 L138.7 67.8 L135.7 67.8 L133.9 67.6 L135.1 69.0 L136.9 69.2 L138.1 68.3 L140.6 67.7 L140.6 66.6 L142.4 67.4 L146.6 66.5 L150.3 66.2 L150.9 65.7 L154.5 66.3 L155.7 66.5 L154.5 65.0 L155.7 63.8 L158.1 64.4 L158.1 66.2 L158.7 64.1 L162.4 64.4 L163.0 63.5 L166.6 63.2 L166.6 62.2 L173.3 61.8 L176.9 60.9 L181.8 61.6 L182.4 63.2 L179.3 63.5 L185.4 63.8 L189.7 63.5 L191.5 64.4 L192.7 65.0 L195.7 64.7 L198.7 64.1 L204.8 65.0 L210.9 65.6 L211.5 66.2 L216.9 65.6 L217.5 66.2 L221.8 66.0 L223.0 66.3 L223.0 68.6 L221.8 68.9 L222.4 70.1 L219.3 70.5 L216.9 71.6 L213.9 71.6 L212.4 72.9 L212.7 74.1 L212.1 74.8 L210.9 75.9 L209.0 77.1 L208.1 74.1 L208.4 73.2 L210.9 71.0 L213.3 70.1 L210.9 70.7 L208.4 70.7 L207.5 71.9 L204.2 71.9 L200.6 72.1 L197.5 74.7 L196.0 74.9 L198.7 75.9 L199.3 76.5 L198.7 78.9 L196.3 81.0 L193.9 81.8 L192.7 82.2 L191.2 83.9 L192.3 85.9 L192.1 86.7 L190.4 87.1 L190.6 85.3 L189.7 85.0 L189.7 84.0 L187.5 84.4 L187.5 83.3 L185.4 84.4 L186.0 85.4 L188.1 85.6 L186.6 86.5 L186.9 88.0 L187.8 89.5 L186.9 91.3 L186.0 92.8 L184.5 94.1 L182.7 94.5 L180.6 95.1 L180.0 95.0 L178.7 95.3 L178.0 96.5 L179.8 98.6 L180.1 100.7 L178.7 101.6 L177.5 102.5 L177.5 101.8 L176.0 100.7 L174.8 99.8 L174.2 101.3 L174.2 102.5 L175.1 104.1 L176.6 105.6 L176.9 107.2 L175.4 106.4 L174.8 104.7 L173.6 103.0 L173.6 100.7 L173.0 98.0 L171.8 98.3 L171.0 97.1 L169.7 95.3 L168.7 94.4 L167.5 94.8 L166.6 95.2 L165.4 96.1 L163.6 98.0 L162.5 98.8 L162.4 100.7 L162.1 101.8 L160.9 103.2 L160.1 101.9 L159.0 99.5 L158.1 97.4 L158.0 95.3 L156.6 95.3 L155.7 94.5 L154.8 93.5 L154.2 92.7 L151.2 92.7 L148.7 92.4 L148.3 91.6 L146.6 91.8 L145.1 91.0 L144.2 89.7 L143.3 89.8 L143.4 90.7 L144.5 92.2 L145.1 93.2 L146.6 93.3 L148.0 92.2 L148.3 93.3 L150.0 94.4 L149.0 95.9 L147.2 97.4 L145.4 98.3 L142.4 99.9 L140.3 100.3 L139.8 98.6 L138.1 95.9 L137.2 93.8 L135.1 91.0 L134.9 90.1 L133.6 89.9 L134.6 89.1 L135.4 87.7 L135.7 86.2 L133.9 86.1 L132.4 86.0 L130.6 85.7 L130.0 84.4 L131.5 83.2 L133.9 82.5 L136.3 83.2 L139.0 82.9 L138.7 81.9 L136.6 80.9 L137.5 79.5 L135.1 80.5 L134.2 81.0 L133.9 80.1 L132.4 80.1 L131.2 81.3 L130.9 82.9 L129.7 83.3 L128.1 83.6 L127.7 85.0 L127.8 85.9 L126.9 85.6 L125.7 83.5 L125.7 82.5 L123.3 81.5 L122.2 80.4 L121.4 80.5 L121.5 81.3 L123.6 82.7 L125.0 83.6 L124.2 83.5 L123.9 84.7 L123.4 85.0 L123.6 83.9 L121.5 82.9 L120.1 81.9 L119.2 81.1 L117.5 81.8 L115.8 81.8 L115.8 82.7 L114.1 83.6 L113.7 84.7 L112.7 85.7 L110.7 86.1 L109.7 85.6ZM99.4 68.3 L100.6 67.8 L103.0 67.9 L105.1 68.0 L105.7 68.6 L104.8 69.1 L102.4 69.6 L100.3 69.3ZM110.6 77.7 L112.1 77.3 L114.7 77.0 L114.9 76.1 L113.9 75.6 L113.0 74.7 L112.7 74.1 L112.7 73.0 L111.8 72.5 L110.9 72.5 L110.3 73.8 L110.9 74.7 L112.1 74.8 L112.0 75.6 L111.2 75.9 L110.9 76.7 L111.8 76.9ZM110.3 76.4 L110.3 75.3 L110.6 74.8 L109.4 74.5 L107.8 75.3 L107.8 76.5 L109.1 76.8ZM120.6 59.8 L123.6 59.5 L129.1 59.3 L130.3 60.1 L126.6 60.7 L124.2 61.5 L122.4 61.0ZM145.1 65.0 L147.8 65.2 L149.0 63.8 L151.5 62.2 L155.4 61.5 L153.9 61.3 L149.0 62.2 L146.6 63.5ZM171.5 60.1 L172.7 58.9 L176.9 59.9 L174.5 60.7 L172.7 60.4ZM142.4 59.4 L147.2 59.5 L151.5 59.0 L149.0 58.6 L144.2 58.9ZM197.5 62.6 L201.8 62.1 L204.8 62.6 L200.6 63.3ZM222.1 65.0 L223.0 64.7 L223.0 65.0ZM4.8 64.7 L6.3 64.9 L4.8 65.0ZM4.8 66.3 L7.9 67.1 L10.9 68.0 L9.7 68.9 L7.2 68.3 L4.8 68.6ZM200.0 75.1 L200.7 76.5 L200.9 78.0 L200.4 79.5 L200.0 80.1 L200.0 78.3 L199.8 76.5ZM198.7 82.5 L199.6 80.5 L201.8 81.6 L200.6 82.5ZM199.5 83.0 L200.0 84.1 L199.3 85.3 L199.0 86.5 L197.8 87.0 L196.3 87.6 L195.7 87.1 L194.2 87.4 L193.3 87.4 L193.3 88.6 L193.0 89.2 L192.7 88.0 L193.3 87.1 L194.5 86.5 L196.3 86.2 L196.9 85.4 L198.1 85.0 L198.7 83.8ZM187.2 92.8 L187.8 92.8 L187.2 94.7 L186.6 94.1ZM179.8 96.3 L180.9 95.9 L181.2 96.2 L180.3 97.0ZM186.9 96.8 L187.8 96.8 L187.8 98.3 L189.0 100.1 L187.8 99.8 L186.9 99.2 L186.6 98.3ZM187.8 103.8 L190.0 102.1 L190.6 103.5 L190.0 104.4 L189.0 103.8ZM188.4 101.0 L189.7 100.5 L189.7 101.9 L188.4 102.2ZM185.0 102.8 L186.3 101.3 L185.7 102.4ZM180.0 107.1 L181.2 106.8 L182.4 105.9 L183.6 105.0 L184.8 103.8 L186.0 105.0 L185.3 106.2 L185.4 107.4 L184.8 108.6 L184.2 110.4 L183.0 110.1 L181.5 109.8 L180.6 108.9ZM171.7 104.6 L173.0 104.8 L174.5 106.3 L176.6 108.0 L177.2 109.2 L178.1 109.8 L178.0 111.5 L176.9 111.3 L175.4 109.8 L173.9 108.0 L172.7 106.5ZM177.7 111.9 L179.3 111.9 L181.2 112.1 L183.3 112.5 L183.2 113.3 L180.6 113.0 L178.4 112.5ZM186.3 111.3 L186.9 109.8 L186.6 107.5 L187.8 107.4 L189.7 107.1 L188.4 107.8 L187.2 108.6 L188.4 108.6 L187.8 109.8 L188.3 111.0 L187.2 110.4 L186.9 111.3ZM189.0 114.1 L190.9 113.2 L189.7 113.2 L188.7 114.1ZM184.2 113.2 L186.0 113.0 L188.4 113.0 L187.8 113.5 L184.8 113.5ZM191.2 106.8 L191.9 107.4 L191.5 108.5 L191.0 107.7ZM191.5 109.8 L193.2 109.9 L192.1 110.2ZM193.3 108.5 L195.1 108.5 L195.7 110.0 L197.5 109.0 L199.3 109.6 L201.8 110.6 L203.3 111.6 L202.4 112.1 L203.6 112.8 L205.1 114.4 L203.0 113.8 L201.2 112.7 L200.6 113.5 L199.3 113.5 L197.5 113.0 L197.5 111.6 L195.7 110.7 L194.5 110.4 L193.9 109.7ZM203.9 111.4 L205.4 111.0 L206.2 110.6 L205.7 111.5 L204.5 111.8ZM183.0 121.3 L182.7 123.8 L183.6 126.2 L183.6 128.6 L185.4 129.2 L187.8 128.6 L190.3 127.6 L192.1 127.2 L193.6 127.1 L195.1 127.9 L196.0 129.1 L197.2 128.0 L197.5 129.5 L198.7 130.7 L200.9 131.5 L202.7 131.6 L204.8 130.7 L205.4 128.6 L206.6 126.8 L206.9 125.0 L206.6 123.2 L205.4 122.2 L204.2 120.4 L202.7 119.5 L202.4 118.3 L202.0 116.8 L200.9 116.5 L200.3 114.5 L199.8 115.9 L199.6 117.7 L198.7 118.7 L196.9 117.6 L196.0 117.0 L196.8 115.4 L195.7 115.3 L194.2 114.8 L193.3 115.4 L192.7 116.8 L191.5 117.0 L190.3 116.5 L189.0 117.9 L188.0 118.9 L186.0 120.1 L184.2 120.6ZM201.6 132.7 L203.6 132.7 L203.6 134.1 L202.4 134.4 L201.8 133.5ZM218.6 128.9 L219.6 130.0 L220.6 130.7 L222.1 130.8 L221.2 131.9 L220.6 132.8 L219.9 133.1 L219.8 132.1 L219.2 131.8 L219.8 131.0 L219.6 130.3ZM218.6 132.5 L219.3 133.1 L218.6 134.4 L217.5 135.3 L217.2 135.9 L216.0 136.2 L214.8 135.9 L216.0 134.7 L217.5 133.8ZM213.3 120.2 L215.1 121.5 L214.8 121.6 L213.3 120.6ZM143.8 115.3 L144.5 117.4 L143.6 118.9 L142.7 122.8 L141.5 123.5 L140.3 122.2 L140.7 120.1 L140.6 118.3 L142.4 117.1ZM162.4 102.1 L163.5 103.5 L163.0 104.4 L162.4 104.2 L162.3 103.2ZM62.4 94.7 L64.2 94.1 L66.0 94.4 L68.5 95.6 L68.9 95.8 L66.9 95.9 L66.6 95.3 L64.2 94.5ZM68.8 96.8 L70.0 95.9 L72.1 96.2 L72.4 96.9 L70.9 97.2ZM66.5 96.8 L67.7 97.0 L66.9 97.2ZM73.2 96.8 L74.1 96.8 L74.0 97.2 L73.2 97.1ZM65.4 63.3 L67.8 63.9 L71.5 65.3 L73.3 66.2 L76.3 67.7 L75.1 69.5 L73.9 70.4 L70.9 69.8 L69.1 68.9 L66.6 68.9 L69.7 67.4 L67.2 65.9 L64.2 65.6 L61.8 65.4 L60.0 65.0 L60.6 63.5 L63.0 63.5ZM41.8 65.9 L43.6 66.2 L46.0 66.5 L50.3 66.4 L52.7 66.0 L52.1 65.0 L50.6 64.4 L50.3 63.6 L48.5 63.6 L47.2 63.9 L44.8 63.5 L42.1 64.0 L43.0 65.0 L41.8 65.9ZM37.7 64.5 L39.4 64.9 L41.2 64.8 L43.3 63.8 L43.9 63.0 L41.8 61.9 L38.8 62.2 L37.8 63.5ZM58.8 61.8 L62.4 61.8 L66.0 61.8 L67.8 60.7 L69.7 60.1 L73.9 59.5 L76.9 58.3 L75.7 57.6 L70.3 57.5 L65.4 57.6 L60.6 58.0 L58.1 58.6 L60.6 59.2 L61.8 59.9 L59.4 60.4 L58.8 61.8ZM57.5 62.9 L61.8 62.9 L65.4 62.9 L65.7 62.2 L63.6 61.9 L59.4 61.5 L56.9 61.8ZM42.4 62.6 L45.4 62.9 L49.7 62.6 L50.0 61.8 L47.2 61.4 L43.0 61.5ZM51.5 64.6 L53.9 64.8 L55.4 64.1 L55.4 63.0 L53.3 63.0 L51.5 63.5ZM61.2 69.5 L64.8 69.3 L63.6 68.3 L61.8 68.3ZM55.7 64.4 L57.5 64.5 L59.4 64.0 L59.4 63.0 L56.0 63.0ZM55.1 60.7 L57.5 60.9 L60.9 60.6 L61.2 59.1 L57.5 58.6 L55.1 59.2ZM50.3 62.6 L52.7 62.7 L55.4 62.6 L56.0 61.3 L53.3 61.2 L50.3 61.3ZM78.0 79.1 L80.0 79.5 L81.8 79.7 L82.0 78.9 L81.2 78.0 L80.0 76.8 L79.1 77.7ZM36.3 77.3 L38.2 77.5 L39.1 78.7 L37.8 78.4ZM33.3 75.3 L34.2 75.4 L34.5 76.4 L33.6 75.9ZM20.3 73.2 L21.5 72.9 L21.5 73.5ZM121.5 85.0 L123.3 84.9 L123.0 85.8 L121.6 85.3ZM118.9 83.2 L119.8 83.2 L119.7 84.2 L119.1 84.4ZM119.2 82.2 L119.7 81.9 L119.6 82.9 L119.2 82.8ZM128.1 86.5 L129.8 86.7 L129.7 86.8 L128.2 86.7ZM133.5 86.8 L134.8 86.4 L134.2 87.0 L133.6 87.0ZM19.4 95.8 L20.0 96.1 L19.5 96.5 L19.3 96.1ZM18.0 94.9 L18.3 95.1 L18.1 95.2ZM155.7 137.7 L156.6 137.8 L156.3 138.1 L155.7 138.0ZM76.9 139.1 L78.8 139.1 L78.4 139.6 L77.1 139.5ZM90.9 140.7 L92.1 141.0 L91.8 141.2ZM221.3 118.6 L222.1 118.6 L221.9 119.0 L221.4 119.0ZM214.9 117.1 L215.2 117.2 L215.3 117.9 L215.0 117.5ZM208.7 112.1 L210.6 113.0 L211.5 113.9 L211.2 114.0 L209.6 113.0ZM146.3 100.4 L146.9 100.4 L146.4 100.5ZM4.8 159.1 L9.7 158.9 L16.9 157.4 L21.8 155.9 L25.4 154.8 L29.1 153.8 L35.1 153.0 L41.2 152.8 L47.2 153.1 L52.1 152.2 L53.3 151.6 L59.4 152.1 L65.4 152.2 L68.5 151.6 L71.5 150.4 L73.3 148.6 L75.7 147.1 L78.8 146.4 L79.4 146.8 L76.9 148.0 L76.3 149.8 L77.5 152.2 L76.3 153.4 L72.7 154.4 L67.8 155.3 L66.6 156.5 L72.7 157.2 L77.5 157.9 L83.6 157.4 L88.4 157.1 L92.1 156.2 L93.9 155.3 L96.9 154.2 L101.8 152.5 L106.6 151.3 L110.9 151.0 L113.9 150.4 L120.0 150.4 L126.0 150.4 L132.1 150.0 L135.1 149.8 L138.1 149.5 L144.2 148.6 L147.2 148.0 L150.3 148.8 L155.1 149.1 L156.3 149.8 L158.1 150.2 L161.2 149.5 L165.4 148.3 L171.5 148.3 L174.5 147.8 L180.6 148.0 L186.6 148.4 L192.7 148.0 L198.7 148.4 L204.8 149.4 L210.9 150.4 L214.5 150.8 L217.5 151.5 L215.7 152.5 L213.0 153.8 L213.3 155.3 L211.5 156.5 L215.7 158.5 L223.0 159.1 L223.0 162.5 L4.8 162.5ZM12.5 75.3 L13.0 75.1 L13.5 75.3 L13.0 75.5ZM11.2 75.7 L11.8 75.5 L12.3 75.7 L11.8 75.9ZM10.0 76.1 L10.6 75.9 L11.1 76.1 L10.6 76.3ZM8.8 76.3 L9.4 76.1 L9.9 76.3 L9.4 76.5ZM7.6 76.4 L8.2 76.2 L8.7 76.4 L8.2 76.6ZM6.3 76.6 L6.8 76.4 L7.4 76.6 L6.8 76.8ZM5.2 76.7 L5.7 76.5 L6.3 76.7 L5.7 76.9ZM221.8 76.8 L222.4 76.6 L222.9 76.8 L222.4 77.0ZM220.9 76.5 L221.5 76.3 L222.0 76.5 L221.5 76.7ZM218.2 75.9 L218.7 75.7 L219.3 75.9 L218.7 76.2ZM32.0 73.0 L32.4 72.5 L32.8 73.0 L32.4 73.4ZM32.6 73.9 L33.0 73.5 L33.4 73.9 L33.0 74.3ZM33.2 74.4 L33.5 74.0 L33.9 74.4 L33.5 74.9ZM35.2 75.8 L35.5 75.3 L35.9 75.8 L35.5 76.2ZM35.7 76.3 L36.0 75.9 L36.4 76.3 L36.0 76.7ZM68.3 135.0 L68.7 134.5 L69.1 135.0 L68.7 135.5ZM68.1 137.4 L68.5 136.9 L68.8 137.4 L68.5 137.9ZM68.2 138.7 L68.6 138.2 L68.9 138.7 L68.6 139.2ZM68.8 140.2 L69.2 139.8 L69.5 140.2 L69.2 140.7ZM69.7 140.8 L70.1 140.4 L70.4 140.8 L70.1 141.3ZM71.1 141.3 L71.5 140.8 L71.8 141.3 L71.5 141.8ZM68.7 135.8 L69.1 135.3 L69.4 135.8 L69.1 136.2ZM68.8 134.1 L69.1 133.6 L69.5 134.1 L69.1 134.5ZM58.7 108.3 L59.1 108.0 L59.4 108.3 L59.1 108.6ZM58.2 108.4 L58.6 108.2 L58.9 108.4 L58.6 108.7ZM23.0 118.7 L23.3 118.4 L23.6 118.7 L23.3 118.9ZM9.2 116.3 L9.5 116.0 L9.8 116.3 L9.5 116.6ZM9.6 116.4 L9.9 116.2 L10.2 116.4 L9.9 116.7ZM7.4 120.8 L7.7 120.6 L8.1 120.8 L7.7 121.1ZM16.9 94.7 L17.2 94.4 L17.6 94.7 L17.2 94.9ZM18.4 95.3 L18.8 95.0 L19.1 95.3 L18.8 95.5ZM18.8 95.4 L19.1 95.1 L19.5 95.4 L19.1 95.7ZM201.3 99.8 L201.6 99.5 L202.0 99.8 L201.6 100.1ZM209.4 103.8 L209.8 103.5 L210.1 103.8 L209.8 104.1ZM195.1 103.5 L195.4 103.2 L195.7 103.5 L195.4 103.7ZM28.7 113.5 L29.1 113.2 L29.4 113.5 L29.1 113.7ZM47.3 124.4 L47.6 124.1 L47.9 124.4 L47.6 124.7ZM148.4 120.2 L148.7 120.0 L149.1 120.2 L148.7 120.5ZM147.2 120.8 L147.5 120.5 L147.9 120.8 L147.5 121.1ZM98.1 85.1 L98.4 84.8 L98.8 85.1 L98.4 85.4ZM96.6 84.6 L96.9 84.3 L97.3 84.6 L96.9 84.9ZM103.6 90.9 L103.9 90.6 L104.2 90.9 L103.9 91.1ZM104.2 91.0 L104.5 90.8 L104.8 91.0 L104.5 91.3ZM103.3 88.2 L103.6 87.9 L103.9 88.2 L103.6 88.5ZM99.0 98.9 L99.4 98.6 L99.7 98.9 L99.4 99.2ZM99.3 98.3 L99.7 98.0 L100.0 98.3 L99.7 98.6ZM157.8 105.6 L158.1 105.3 L158.5 105.6 L158.1 105.8ZM157.5 112.2 L157.8 112.0 L158.2 112.2 L157.8 112.5ZM169.8 100.7 L170.1 100.5 L170.5 100.7 L170.1 101.0ZM170.4 103.5 L170.7 103.2 L171.1 103.5 L170.7 103.7ZM147.2 110.8 L147.5 110.5 L147.9 110.8 L147.5 111.1ZM139.8 115.1 L140.1 114.8 L140.5 115.1 L140.1 115.4ZM76.6 99.2 L76.9 98.9 L77.3 99.2 L76.9 99.5ZM76.3 98.2 L76.6 97.9 L77.0 98.2 L76.6 98.5ZM76.4 101.7 L76.8 101.4 L77.1 101.7 L76.8 102.0ZM66.6 92.8 L66.9 92.6 L67.3 92.8 L66.9 93.1ZM66.3 91.9 L66.6 91.7 L67.0 91.9 L66.6 92.2ZM67.5 93.5 L67.8 93.2 L68.2 93.5 L67.8 93.7ZM74.4 88.4 L74.7 88.2 L75.0 88.4 L74.7 88.7ZM110.1 117.6 L110.4 117.4 L110.8 117.6 L110.4 117.9ZM104.8 112.8 L105.2 112.5 L105.5 112.8 L105.2 113.1ZM136.4 136.4 L136.7 136.1 L137.1 136.4 L136.7 136.6ZM144.9 136.1 L145.2 135.8 L145.6 136.1 L145.2 136.3ZM160.5 131.0 L160.9 130.8 L161.2 131.0 L160.9 131.3ZM97.5 143.5 L97.8 143.2 L98.2 143.5 L97.8 143.7ZM86.0 144.7 L86.3 144.5 L86.7 144.7 L86.3 145.0ZM77.8 145.6 L78.1 145.3 L78.5 145.6 L78.1 145.8ZM76.9 146.0 L77.2 145.7 L77.6 146.0 L77.2 146.3ZM213.6 138.7 L213.9 138.5 L214.2 138.7 L213.9 139.0ZM216.0 139.8 L216.3 139.5 L216.6 139.8 L216.3 140.1ZM209.9 141.1 L210.2 140.8 L210.5 141.1 L210.2 141.4ZM6.6 134.7 L6.9 134.4 L7.3 134.7 L6.9 134.9ZM215.3 125.6 L215.6 125.3 L216.0 125.6 L215.6 125.8ZM209.9 127.1 L210.3 126.8 L210.6 127.1 L210.3 127.4ZM5.7 118.9 L6.0 118.6 L6.4 118.9 L6.0 119.2ZM222.3 118.0 L222.7 117.7 L223.0 118.0 L222.7 118.3ZM215.6 118.7 L215.9 118.5 L216.2 118.7 L215.9 119.0ZM216.3 119.8 L216.6 119.5 L217.0 119.8 L216.6 120.1ZM210.6 115.0 L211.0 114.8 L211.3 115.0 L211.0 115.3ZM211.7 114.4 L212.1 114.1 L212.4 114.4 L212.1 114.6ZM207.8 111.8 L208.1 111.5 L208.5 111.8 L208.1 112.1ZM205.7 110.0 L206.0 109.7 L206.3 110.0 L206.0 110.3ZM202.6 109.2 L203.0 108.9 L203.3 109.2 L203.0 109.5ZM195.7 87.4 L196.0 87.1 L196.3 87.4 L196.0 87.7ZM191.1 91.9 L191.5 91.7 L191.8 91.9 L191.5 92.2ZM192.0 90.9 L192.4 90.6 L192.7 90.9 L192.4 91.1ZM199.7 91.6 L200.1 91.4 L200.4 91.6 L200.1 91.9ZM206.3 78.9 L206.6 78.6 L207.0 78.9 L206.6 79.2ZM207.5 77.7 L207.8 77.4 L208.2 77.7 L207.8 78.0ZM205.1 79.8 L205.4 79.5 L205.7 79.8 L205.4 80.1ZM203.3 80.7 L203.6 80.5 L203.9 80.7 L203.6 81.0ZM202.0 81.2 L202.4 80.9 L202.7 81.2 L202.4 81.5ZM102.1 68.6 L102.4 68.3 L102.7 68.6 L102.4 68.9ZM125.7 65.5 L126.0 65.2 L126.4 65.5 L126.0 65.7ZM122.7 66.5 L123.0 66.2 L123.3 66.5 L123.0 66.8ZM109.3 70.4 L109.7 70.2 L110.0 70.4 L109.7 70.7ZM112.8 71.5 L113.1 71.2 L113.4 71.5 L113.1 71.7ZM111.7 72.2 L112.1 72.0 L112.4 72.2 L112.1 72.5ZM109.6 73.2 L110.0 72.9 L110.3 73.2 L110.0 73.4ZM125.1 60.1 L125.4 59.9 L125.7 60.1 L125.4 60.4ZM127.5 61.0 L127.8 60.8 L128.2 61.0 L127.8 61.3ZM149.9 58.9 L150.3 58.6 L150.6 58.9 L150.3 59.2ZM169.3 59.5 L169.7 59.2 L170.0 59.5 L169.7 59.8ZM68.1 66.5 L68.5 66.2 L68.8 66.5 L68.5 66.8ZM65.1 70.4 L65.4 70.2 L65.8 70.4 L65.4 70.7ZM65.7 73.8 L66.0 73.5 L66.4 73.8 L66.0 74.0ZM53.0 61.9 L53.3 61.7 L53.6 61.9 L53.3 62.2ZM46.9 60.7 L47.2 60.5 L47.6 60.7 L47.2 61.0ZM54.2 60.4 L54.5 60.2 L54.8 60.4 L54.5 60.7ZM51.1 60.4 L51.5 60.2 L51.8 60.4 L51.5 60.7ZM56.0 61.3 L56.3 61.1 L56.7 61.3 L56.3 61.6ZM62.1 61.0 L62.4 60.8 L62.7 61.0 L62.4 61.3ZM53.3 66.4 L55.7 66.4 L56.0 65.7 L53.9 65.6ZM39.4 61.9 L43.0 61.3 L43.6 60.7 L41.2 60.7 L39.1 61.3ZM50.3 61.0 L53.9 61.0 L55.1 60.4 L52.7 59.8 L49.7 60.1ZM64.8 63.8 L67.5 64.0 L67.8 63.4 L65.4 63.2ZM55.4 62.7 L57.5 62.7 L57.2 62.1 L55.4 62.2ZM63.3 70.2 L65.4 70.1 L64.5 69.7ZM64.2 75.9 L65.1 76.0 L64.8 75.7ZM74.8 77.8 L76.4 78.2 L75.7 77.9ZM74.9 79.7 L76.3 79.8 L75.7 80.1Z" fill="#ece9dd" stroke="#69664f" stroke-width="0.7" stroke-linejoin="round"/>
<path d="M142.4 81.0 L144.2 80.7 L146.0 79.8 L146.0 81.0 L144.5 81.9 L146.0 83.2 L146.6 85.3 L144.5 85.6 L143.6 84.7 L143.9 83.5 L142.7 81.9Z" fill="#ffffff" stroke="#6f6c58" stroke-width="0.4" stroke-linejoin="round"/>
<path d="M39.4 78.3 L56.3 78.3 L60.0 78.9 L63.0 79.8 L63.9 80.7 L63.9 82.5 L66.0 81.9 L67.5 81.3 L68.5 80.7 L70.6 80.7 L72.1 79.3 L72.8 79.5 L73.3 80.7M28.5 65.8 L28.5 71.5 L30.9 72.2 L32.1 71.9 L35.1 74.4M42.9 88.3 L44.4 88.2 L46.6 89.0 L48.5 88.9 L49.4 88.7 L50.6 90.1 L51.5 90.4 L52.7 89.9 L53.6 91.3 L54.9 92.2M58.0 99.2 L58.8 98.3 L58.8 97.2 L60.0 97.2 L60.4 96.8M60.0 97.2 L59.8 98.3 L60.3 98.4M59.4 99.6 L59.8 99.3 L60.3 98.4M60.8 100.1 L59.8 99.3M60.9 100.1 L62.4 99.2 L63.5 98.9M62.0 101.3 L63.2 101.4M63.6 103.0 L63.9 102.2M70.4 96.1 L70.4 97.1M70.3 100.7 L70.0 103.2 L71.5 103.8 L73.0 104.4 L73.3 107.3M66.1 107.2 L68.1 108.0M65.2 110.1 L66.3 111.0 L68.1 108.0 L71.5 110.5M71.5 110.5 L71.8 108.6 L71.5 107.1 L73.3 107.3 L75.1 106.8 L75.7 105.6 L77.1 104.8 L77.5 102.8M77.1 104.8 L77.7 105.4 L77.7 107.1 L78.8 107.1 L79.7 106.8 L80.9 106.6 L82.1 106.5 L82.6 105.6M79.2 104.5 L79.1 106.8M81.2 104.5 L80.9 106.6M71.5 110.5 L69.7 111.0 L69.1 112.5 L70.3 114.1 L71.2 114.7 L71.8 114.7 L72.1 117.1 L71.8 118.6 L71.3 119.2M71.8 114.7 L74.3 114.1 L74.5 115.3 L77.2 116.3 L77.5 117.9 L78.6 117.9 L78.9 118.9 L78.8 120.1 L78.8 121.4 L80.1 121.5 L81.0 122.5 L80.8 123.5 L81.3 124.5 L79.0 126.3 L81.5 128.4M71.8 118.6 L72.7 121.8 L73.2 121.8 L74.8 121.5 L76.0 121.5 L76.5 119.9 L78.6 120.0M76.0 121.5 L79.0 123.3 L78.4 124.5 L80.0 124.5 L80.8 123.5M79.0 126.3 L78.5 128.6M73.2 121.8 L72.4 123.2 L71.6 126.2 L71.5 128.0 L71.2 129.8 L70.9 131.6 L70.4 134.1 L70.3 136.5 L69.7 138.3 L70.3 139.5 L72.4 139.7M72.3 139.9 L72.3 141.3M112.7 86.7 L113.2 88.3 L111.8 89.2 L108.6 90.6 L108.6 91.5 L111.0 92.8 L114.6 95.3 L115.8 96.0 L116.4 96.4 L117.5 96.1 L121.2 93.8 L123.0 94.1 L128.4 96.2 L128.4 98.5 L127.5 100.3 L127.8 101.3 L128.2 102.7 L130.5 104.9 L132.6 105.9 L134.5 105.5 L135.7 105.2 L136.9 105.8 L138.7 105.6 L139.4 105.5 L141.2 105.0 L143.0 103.2 L142.4 103.2 L140.0 102.4 L139.8 101.4M108.6 91.2 L106.0 91.2M108.6 91.5 L108.6 92.2 L106.6 92.2 L106.6 93.8 L106.0 94.1 L106.0 95.1 L103.6 95.1M111.0 92.8 L110.0 92.8 L110.6 98.6 L106.9 98.6 L106.5 99.1 L107.0 100.5 L108.7 101.3 L109.1 101.8 L110.6 101.7 L112.2 102.1 L112.1 105.0M103.9 98.3 L105.4 97.9 L106.5 99.1M103.7 99.8 L105.4 99.8 L103.7 100.0M107.0 100.5 L105.6 100.4 L103.8 100.5M104.8 101.3 L105.6 100.9 L105.6 100.4M105.8 102.5 L107.7 102.8 L106.9 103.8M107.7 102.8 L108.7 103.4 L109.4 105.3M108.7 103.4 L109.1 101.8M110.6 101.7 L111.5 99.9 L113.6 98.9 L114.0 98.9 L116.4 98.0 L116.4 96.4M112.2 102.1 L112.2 101.3 L113.9 101.3 L114.2 103.2 L114.6 104.3M113.9 101.3 L114.4 101.3 L114.9 104.2M114.4 101.3 L115.2 100.5 L116.1 100.9 L115.5 104.1M114.0 98.9 L115.2 100.5M116.1 100.9 L116.4 99.8 L118.1 100.1 L120.0 99.9 L122.1 99.7 L122.5 100.5 L122.1 101.9 L120.9 103.9 L119.1 105.2M121.2 93.8 L119.7 92.0 L119.7 89.7 L118.9 88.3 L118.4 87.5 L119.1 85.7M119.7 89.7 L120.9 87.9M129.1 88.9 L129.1 94.7 L136.3 94.7M129.1 94.7 L129.1 95.9 L128.4 95.9 L128.4 96.2M123.0 94.1 L123.3 97.8 L122.1 99.3 L122.1 99.7M122.5 100.5 L123.0 101.9 L122.3 102.1 L123.3 103.5 L125.4 102.5 L127.8 101.3M123.3 103.5 L122.7 105.0 L123.6 106.7 L125.2 105.9 L127.5 105.5 L130.5 104.9M119.8 106.6 L121.9 106.7 L123.6 106.7M119.8 107.4 L120.7 107.4 L120.7 106.7M121.9 106.7 L122.7 108.3 L122.6 109.2 L120.7 110.4M125.2 105.9 L124.8 108.3 L123.6 109.8 L123.3 110.7 L121.3 111.5 L123.9 111.6 L124.2 112.8 L125.7 112.5 L127.2 114.7 L128.4 114.7 L128.4 115.9 L127.2 115.9 L127.2 117.8 L128.1 118.7 L129.2 118.8 L130.3 118.9 L131.4 117.7 L132.3 117.5 L133.9 116.5 L133.8 113.7 L132.6 113.0 L131.7 110.7 L132.6 109.5 L132.4 108.7 L134.5 108.6 L136.7 109.8 L137.7 110.8M121.3 110.8 L121.8 110.8 L121.3 111.5M121.1 118.5 L122.4 118.5 L125.1 118.6 L128.1 118.7M126.0 121.3 L126.0 125.2 L123.9 125.3M126.0 121.3 L126.6 121.3 L126.6 119.1 L128.1 118.7M126.0 123.0 L126.5 124.2 L127.8 123.3 L129.4 123.5 L130.3 122.3 L131.7 121.5 L132.9 121.6 L133.3 122.8 L133.3 124.2 L133.8 124.2M129.2 118.8 L130.7 120.4 L131.7 121.5M132.9 121.6 L133.9 119.8 L133.9 118.1 L132.3 117.5M128.4 114.7 L130.6 115.4 L131.5 116.1 L132.0 115.4 L131.1 115.2 L131.2 113.8 L131.4 113.2 L132.6 113.0M133.9 116.5 L135.1 118.2 L135.6 116.8 L134.9 115.0 L136.9 114.8 L138.4 114.4M134.9 115.0 L134.5 113.8 L133.8 113.7M131.7 110.7 L132.4 109.5 L131.7 109.7 L131.8 108.8 L132.4 108.7M131.8 108.8 L131.9 107.5 L132.9 106.7 L132.6 105.9M134.5 108.6 L134.5 107.4 L135.1 106.8 L134.5 105.5M138.7 105.6 L138.7 108.6 L139.1 109.0M135.7 105.2 L133.9 103.2 L134.7 101.6 L135.9 99.2 L137.2 99.3 L138.7 100.1 L140.0 100.4M135.9 99.2 L137.2 97.1M128.2 102.7 L129.1 101.9 L130.9 102.2 L133.9 101.9 L133.9 100.7 L134.7 101.6M139.2 101.3 L139.8 101.4 L140.1 101.0M130.3 125.9 L131.2 125.3 L131.7 125.9 L130.9 126.5 L130.3 125.9M132.7 124.5 L133.3 124.2 L133.2 123.6 L132.7 123.6 L132.7 124.5M108.6 82.6 L110.0 82.7 L109.7 83.8 L109.4 85.5M112.8 81.7 L115.8 82.3M115.4 77.0 L116.4 77.7 L117.5 78.0 L118.9 78.3 L118.5 79.2 L117.5 80.0 L118.1 80.2 L118.1 81.3 L118.4 81.5M118.5 79.2 L119.7 79.2 L120.3 79.6 L119.4 80.1 L118.1 80.2M118.3 75.7 L117.5 76.6 L117.5 77.2 L117.5 78.0M116.0 76.9 L117.5 77.0M119.1 74.7 L119.9 74.8M122.5 75.3 L122.8 77.1 L121.3 77.5 L122.3 78.4 L121.8 79.2 L119.7 79.2M120.3 79.6 L122.2 79.8 L123.6 79.6 L124.0 79.9 L125.4 80.2 L126.2 80.1 L127.8 78.9M122.3 78.4 L124.2 78.4 L124.3 78.9 L123.9 79.5 L123.6 79.6M122.8 77.1 L125.3 78.0 L127.5 78.2 L128.4 77.2 L128.2 76.5 L128.4 75.3M124.2 78.4 L125.3 78.0M125.9 75.0 L127.7 75.0 L128.4 75.3 L130.0 74.2 L131.0 73.9 L130.5 73.2 L130.9 71.9M126.6 74.0 L130.0 74.2M128.6 72.9 L130.5 73.2M126.6 74.5 L127.7 74.7 L127.7 75.0M131.0 73.9 L132.7 74.7 L133.7 75.6 L132.9 76.4 L135.4 77.5 L138.1 77.9 L138.0 79.0 L137.0 79.5M128.2 76.7 L132.9 76.4M127.5 78.2 L127.4 78.7 L127.8 78.9 L130.0 78.7 L131.0 80.4 L131.8 80.5M130.0 78.7 L132.1 79.9 L131.0 80.4M124.3 78.9 L125.3 79.0 L127.4 78.7M126.2 80.1 L126.9 80.9 L127.7 81.2 L130.3 81.3 L131.2 81.5M127.7 81.2 L127.5 82.4 L127.8 83.0 L129.8 82.7 L130.9 82.5M129.8 82.7 L129.7 83.3M126.0 83.9 L126.6 83.2 L127.8 83.0M125.7 82.6 L126.3 82.4 L126.6 83.2M126.3 82.4 L127.5 82.4M125.4 80.8 L125.5 81.6 L125.1 82.2M125.5 81.6 L126.3 82.4M122.2 80.4 L123.5 80.6 L124.2 80.6 L125.4 80.8 L125.4 80.2M123.5 80.6 L123.7 81.2 L124.6 81.9 L125.1 82.2M120.9 72.2 L121.4 71.0 L121.3 69.5 L122.7 68.0 L124.8 66.5 L126.3 66.2 L129.5 65.9 L130.9 65.6 L131.5 66.1 L132.6 65.7M128.4 68.1 L128.3 66.9 L126.3 66.2M130.7 71.3 L133.0 69.9 L132.0 68.7 L132.1 67.0 L131.2 66.2 L132.6 65.7M109.5 74.7 L109.1 75.0 L110.1 75.2M135.7 86.2 L136.1 85.7 L139.5 85.5 L141.0 85.5 L140.6 84.1 L140.3 83.1 L139.0 82.9M138.1 81.7 L142.1 82.7 L143.3 82.7M140.3 83.1 L142.1 83.1 L142.1 84.4 L140.6 84.1M142.1 83.1 L142.1 82.7M142.1 84.4 L143.5 84.7M141.0 85.5 L141.8 86.8 L141.5 87.5 L142.9 88.7 L143.3 89.8M139.5 85.5 L138.7 87.2 L137.4 87.8 L136.2 88.4 L135.6 87.8M135.6 87.8 L136.0 87.0 L135.7 87.0M137.4 87.8 L137.7 88.5 L136.3 88.9 L136.9 89.5 L135.7 90.3 L135.1 90.2M134.7 89.0 L135.0 90.1M135.4 87.9 L135.4 88.9 L135.1 90.2M137.7 88.5 L141.0 90.3 L142.1 90.4 L143.2 90.7M142.1 90.4 L142.8 89.8 L143.0 89.8M139.8 98.1 L140.6 97.5 L142.4 97.7 L145.4 96.5 L147.2 95.9 L147.6 94.6 L147.4 94.2 L145.8 94.1 L145.2 93.3M145.4 96.5 L146.1 97.9M147.6 94.6 L148.0 92.5M146.6 85.4 L148.4 84.9 L149.8 85.3 L151.0 85.8 L150.6 87.6 L151.4 89.0 L150.8 89.9 L152.2 91.5 L151.2 92.7M150.8 89.9 L154.1 89.9 L155.9 88.7 L157.0 87.4 L157.3 85.9 L159.3 85.5M151.0 85.8 L153.0 86.0 L154.2 85.3 L155.1 85.6 L157.2 85.0 L159.3 85.5M154.2 85.3 L151.5 83.0 L149.4 82.1 L147.8 83.0 L147.8 80.7 L149.4 80.4 L150.9 81.1 L153.9 82.6 L155.1 83.2 L156.9 82.4 L158.7 81.8 L162.5 82.4M147.8 83.0 L145.7 82.7M162.5 82.4 L158.6 84.1 L156.6 83.8 L155.1 84.4 L155.0 85.5M156.9 82.4 L157.2 83.6 L158.6 84.1 L159.3 85.5M143.6 79.9 L142.1 78.7 L143.0 77.4 L145.1 76.8 L147.2 77.3 L149.4 77.1 L151.2 77.1 L150.9 75.3 L155.1 74.7 L156.9 75.2 L160.0 75.3 L162.4 77.1 L164.2 77.1 L166.8 78.2M166.8 78.2 L165.7 79.5 L163.9 80.5 L162.5 82.4M166.8 78.2 L169.7 77.3 L173.3 76.5 L175.7 77.4 L179.3 78.1 L183.0 77.6 L184.6 77.8M166.8 78.2 L169.0 80.6 L171.7 81.2 L172.3 82.1 L177.5 82.8 L181.7 81.5 L184.0 80.5 L186.4 79.7 L184.6 77.8M184.6 77.8 L186.6 75.7 L189.7 75.8 L191.2 77.8 L193.3 79.1 L195.7 78.7 L194.5 80.7 L193.3 80.7 L193.3 82.0 L193.0 82.3 L191.5 82.9 L190.7 82.7 L189.2 83.8M190.3 85.1 L191.7 84.6M159.3 85.5 L161.0 86.5 L159.0 88.1 L158.7 89.8 L156.9 91.2 L156.3 92.4 L156.9 93.2 L155.2 93.6M161.0 86.5 L161.8 88.3 L163.0 89.7 L162.4 90.5 L164.8 91.4 L167.3 92.0 L167.3 91.1 L165.4 90.8 L163.0 89.7M167.3 91.1 L167.7 91.5 L169.7 91.2 L169.7 91.8 L167.7 91.8 L167.7 91.5M169.7 91.2 L172.9 90.9 L171.6 91.9 L171.2 93.0 L170.4 94.1 L170.0 95.1M167.3 92.0 L167.4 93.2 L167.8 94.7M170.0 95.1 L169.8 93.6 L169.2 93.5 L169.9 92.8 L168.3 92.7 L167.3 92.0M172.9 90.9 L173.7 92.5 L173.0 93.5 L174.0 94.6 L175.2 95.0 L174.6 95.6 L173.2 96.8 L173.8 98.1 L173.4 98.9 L174.0 100.7 L173.7 101.9M174.6 95.6 L175.1 97.4 L176.9 96.9 L177.9 98.6 L177.7 99.3M175.2 95.0 L175.8 94.4 L177.5 95.8 L177.5 96.7 L179.1 99.2 L179.0 100.5 L178.1 101.3 L177.2 101.7M175.8 94.4 L177.7 93.9 L179.3 95.0M176.3 100.9 L176.0 99.8 L177.7 99.3 L179.1 99.2M174.6 104.1 L175.8 104.2M180.3 106.8 L181.2 107.4 L183.0 107.1 L184.1 105.4 L185.1 105.5M183.1 105.2 L183.7 105.3 L183.6 105.0M199.3 109.6 L199.3 113.5M189.1 113.7 L189.7 113.5" fill="none" stroke="#6f6c58" stroke-width="0.6" stroke-linejoin="round"/>
<path d="M114 101.9 V113.9 M108.1 107.9 H119.9" stroke="#b24fd6" stroke-width="3.4" fill="none"/>
</svg></div>
<div class="cb" style="left:11px;top:720px"></div>
<div class="x" id="cb1t" style="top:718px;left:29.39px"><span class="s" style="width:40.81px;transform:scaleX(1.0114)">Show </span><span class="s" style="width:83.00px;transform:scaleX(1.0312)">superseded </span><span class="s" style="width:74.99px;transform:scaleX(1.0763)">transforms</span></div>
<div class="cb" style="left:538px;top:720px"><svg width="12" height="12" viewBox="0 0 12 12"><path d="M2.1 6 L4.6 9.9 L9.3 1.6" stroke="#000" stroke-width="1.9" fill="none"/></svg></div>
<div class="x" id="cb2t" style="top:718px;left:556.95px"><span class="s" style="width:42.00px;transform:scaleX(1.0928)">Allow </span><span class="s" style="width:56.49px;transform:scaleX(1.0601)">fallback </span><span class="s" style="width:78.45px;transform:scaleX(1.0760)">transforms </span><span class="s" style="width:12.98px;transform:scaleX(1.1800)">if </span><span class="s" style="width:69.47px;transform:scaleX(1.1024)">preferred </span><span class="s" style="width:70.47px;transform:scaleX(1.0887)">operation </span><span class="s" style="width:27.87px;transform:scaleX(1.0616)">fails</span></div>
<div class="btn" style="left:11px"></div><div class="btn" style="left:755px"></div><div class="btn ok" style="left:841px"></div>
<div class="ic" style="left:25.5px"><svg width="16" height="16" viewBox="0 0 16 16"><circle cx="8" cy="8" r="7.9" fill="#3a8cd8"/><text x="8" y="12.3" font-family="Liberation Sans, sans-serif" font-weight="bold" font-size="12" fill="#fff" text-anchor="middle">?</text></svg></div>
<div class="ic" style="left:763px"><svg width="16" height="16" viewBox="0 0 16 16"><circle cx="8" cy="8" r="7.9" fill="#d3233b"/><path d="M5.6 5.6 L10.4 10.4 M10.4 5.6 L5.6 10.4" stroke="#fff" stroke-width="1.6" stroke-linecap="round"/></svg></div>
<div class="ic" style="left:861px"><svg width="16" height="16" viewBox="0 0 16 16"><circle cx="8" cy="8" r="7.9" fill="#1c9436"/><path d="M4.6 8.3 L7 10.6 L11.4 5.8" stroke="#fff" stroke-width="1.7" fill="none" stroke-linecap="round" stroke-linejoin="round"/></svg></div>
<div class="x" id="bhelp" style="top:748px;left:42.44px"><span class="s" style="width:32.73px;transform:scaleX(1.0788)">Help</span></div>
<div class="x" id="bcancel" style="top:748px;left:779.49px;transform:scaleX(1.0114);"><u>C</u>ancel</div>
<div class="x" id="bok" style="top:748px;left:878.06px;transform:scaleX(0.9660);"><u>O</u>K</div>
<div id="edgeB"></div>
</div>
<div id="edgeR"></div>
</body>
</html>
